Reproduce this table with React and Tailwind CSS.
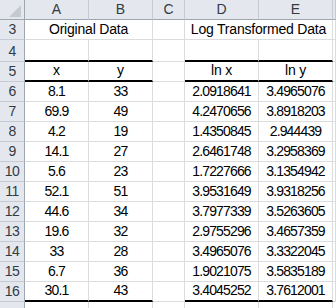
const rows = [
  [6, '8.1', '33', '2.0918641', '3.4965076'],
  [7, '69.9', '49', '4.2470656', '3.8918203'],
  [8, '4.2', '19', '1.4350845', '2.944439'],
  [9, '14.1', '27', '2.6461748', '3.2958369'],
  [10, '5.6', '23', '1.7227666', '3.1354942'],
  [11, '52.1', '51', '3.9531649', '3.9318256'],
  [12, '44.6', '34', '3.7977339', '3.5263605'],
  [13, '19.6', '32', '2.9755296', '3.4657359'],
  [14, '33', '28', '3.4965076', '3.3322045'],
  [15, '6.7', '36', '1.9021075', '3.5835189'],
  [16, '30.1', '43', '3.4045252', '3.7612001'],
];

function RowHead({ children }) {
  return (
    <div className="bg-[#e4e8ee] border-r border-b border-r-[#9ea6b0] border-b-[#c6cbd2] flex items-end justify-center pb-[3px] text-[14px] tracking-[-0.6px] leading-none text-[#333a44]">
      {children}
    </div>
  );
}

function ColHead({ children }) {
  return (
    <div className="bg-[#e4e8ee] border-r border-b border-r-[#c6cbd2] border-b-[#9ea6b0] flex items-end justify-center pb-[3px] text-[14px] leading-none text-[#333a44]">
      {children}
    </div>
  );
}

function Cell({ children, thick, num, className = '' }) {
  return (
    <div
      className={`bg-white border-r border-r-[#dadcdd] flex items-end justify-center pb-[3px] text-[14px] leading-none text-black ${
        thick ? 'border-b-2 border-b-black' : 'border-b border-b-[#dadcdd]'
      } ${num ? 'tracking-[-0.85px]' : 'tracking-[-0.2px]'} ${className}`}
    >
      {children}
    </div>
  );
}

export default function App() {
  return (
    <div className="w-[336px] h-[308px] overflow-hidden bg-white font-['Liberation_Sans',Arial,sans-serif]">
      <div className="grid grid-cols-[25px_64px_64px_32px_74px_74px_3px] grid-rows-[20px_20px_22px_repeat(12,20px)_6px]">
        {/* column headers */}
        <div className="bg-[#e4e8ee] border-r border-b border-r-[#9ea6b0] border-b-[#9ea6b0] flex items-end justify-end pr-[3px] pb-[2px]">
          <svg width="12" height="12" viewBox="0 0 12 12">
            <path d="M12 0 L12 12 L0 12 Z" fill="#c4c9d0" />
          </svg>
        </div>
        <ColHead>A</ColHead>
        <ColHead>B</ColHead>
        <ColHead>C</ColHead>
        <ColHead>D</ColHead>
        <ColHead>E</ColHead>
        <ColHead />

        {/* row 3 */}
        <RowHead>3</RowHead>
        <Cell className="col-span-2">Original Data</Cell>
        <Cell />
        <Cell className="col-span-2">Log Transformed Data</Cell>
        <Cell />

        {/* row 4 */}
        <RowHead>4</RowHead>
        <Cell thick />
        <Cell thick />
        <Cell />
        <Cell thick />
        <Cell thick />
        <Cell />

        {/* row 5 */}
        <RowHead>5</RowHead>
        <Cell thick>x</Cell>
        <Cell thick>y</Cell>
        <Cell />
        <Cell thick>ln x</Cell>
        <Cell thick>ln y</Cell>
        <Cell />

        {rows.map(([n, x, y, lx, ly]) => {
          const last = n === 16;
          return [
            <RowHead key={`h${n}`}>{n}</RowHead>,
            <Cell key={`a${n}`} num thick={last}>{x}</Cell>,
            <Cell key={`b${n}`} num thick={last}>{y}</Cell>,
            <Cell key={`c${n}`} />,
            <Cell key={`d${n}`} num thick={last}>{lx}</Cell>,
            <Cell key={`e${n}`} num thick={last}>{ly}</Cell>,
            <Cell key={`f${n}`} />,
          ];
        })}

        {/* row 17, cut off */}
        <div className="bg-[#e4e8ee] border-r border-r-[#9ea6b0]" />
        <div className="bg-white border-r border-r-[#dadcdd]" />
        <div className="bg-white border-r border-r-[#dadcdd]" />
        <div className="bg-white border-r border-r-[#dadcdd]" />
        <div className="bg-white border-r border-r-[#dadcdd]" />
        <div className="bg-white border-r border-r-[#dadcdd]" />
        <div className="bg-white" />
      </div>
    </div>
  );
}
